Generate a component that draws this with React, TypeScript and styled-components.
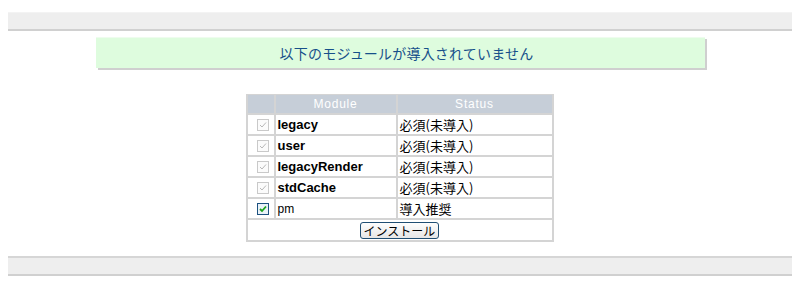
import React from 'react'
import styled, { createGlobalStyle } from 'styled-components'

const GlobalStyle = createGlobalStyle`
  html, body {
    margin: 0;
    padding: 0;
    background: #ffffff;
  }
  body {
    padding: 12px 8px 0;
    font-family: "Liberation Sans", "Noto Sans CJK JP", sans-serif;
    color: #000;
  }
`

const Bar = styled.div<{ bottom?: boolean }>`
  height: 16px;
  background: #eeeeee;
  border-top: ${({ bottom }) => (bottom ? '2px solid #d6d6d6' : '1px solid #f3f3f3')};
  border-bottom: 2px solid #d0d0d0;
`

const Content = styled.div`
  display: flex;
  flex-direction: column;
  align-items: center;
  padding: 6px 0 14px;
`

const Notice = styled.div`
  width: 609px;
  height: 31px;
  margin-left: 1px;
  padding-left: 12px;
  box-sizing: border-box;
  background: #defcde;
  border-top: 1px solid #eefcee;
  box-shadow: 2px 2px 0 #cfcfcf;
  display: flex;
  align-items: center;
  justify-content: center;
  color: #17508a;
  font-family: "Noto Sans CJK JP", sans-serif;
  font-size: 14px;
  letter-spacing: 0.2px;
`

const Table = styled.table`
  margin-top: 26px;
  margin-right: 1px;
  width: 308px;
  border-collapse: collapse;
  border: 1px solid #cfcfcf;
`

const HeadCell = styled.th<{ w?: number }>`
  background: #c6ced8;
  color: #ffffff;
  font-weight: normal;
  font-size: 12px;
  letter-spacing: 0.8px;
  height: 18px;
  padding: 0;
  border: 2px solid #d4d4d4;
  border-top: 1px solid #d4d4d4;
  width: ${({ w }) => (w ? `${w}px` : 'auto')};
`

const Cell = styled.td<{ center?: boolean; bold?: boolean; jp?: boolean }>`
  height: 19px;
  padding: 0 0 0 2px;
  border: 2px solid #d4d4d4;
  text-align: ${({ center }) => (center ? 'center' : 'left')};
  font-weight: ${({ bold }) => (bold ? 'bold' : 'normal')};
  font-family: ${({ jp }) => (jp ? '"Noto Sans CJK JP", sans-serif' : '"Liberation Sans", sans-serif')};
  font-size: ${({ jp, bold }) => (jp ? '13px' : bold ? '13px' : '12px')};
  line-height: 16px;
`

const Box = styled.span<{ active?: boolean }>`
  display: inline-flex;
  align-items: center;
  justify-content: center;
  width: 10px;
  height: 10px;
  margin-left: 2px;
  border: 1px solid ${({ active }) => (active ? '#1c5180' : '#c9c9c9')};
  background: ${({ active }) => (active ? '#eaf2f8' : '#fbfbfb')};
  vertical-align: middle;
`

const Footer = styled.td`
  height: 19px;
  padding: 0;
  text-align: center;
  border: 2px solid #d4d4d4;
`

const Button = styled.button`
  width: 79px;
  height: 17px;
  padding: 0;
  margin: 2px 0 0 0;
  border: 1px solid #1f4e73;
  border-radius: 3px;
  background: linear-gradient(#fdfdfd, #e6e6e6);
  font-family: "Noto Sans CJK JP", sans-serif;
  font-size: 12px;
  line-height: 14px;
  color: #000;
`

function Check({ active }: { active?: boolean }) {
  return (
    <Box active={active}>
      <svg width="8" height="8" viewBox="0 0 8 8">
        <path
          d="M1 4 L3 6 L7 1.5"
          fill="none"
          stroke={active ? '#1aa31a' : '#b8b8b8'}
          strokeWidth={active ? 1.8 : 1}
        />
      </svg>
    </Box>
  )
}

const modules = [
  { name: 'legacy', status: '必須(未導入)', required: true },
  { name: 'user', status: '必須(未導入)', required: true },
  { name: 'legacyRender', status: '必須(未導入)', required: true },
  { name: 'stdCache', status: '必須(未導入)', required: true },
  { name: 'pm', status: '導入推奨', required: false },
]

export default function App() {
  return (
    <>
      <GlobalStyle />
      <Bar />
      <Content>
        <Notice>以下のモジュールが導入されていません</Notice>
        <Table>
          <thead>
            <tr>
              <HeadCell w={26} />
              <HeadCell w={120}>Module</HeadCell>
              <HeadCell>Status</HeadCell>
            </tr>
          </thead>
          <tbody>
            {modules.map((m) => (
              <tr key={m.name}>
                <Cell center>
                  <Check active={!m.required} />
                </Cell>
                <Cell bold={m.required}>{m.name}</Cell>
                <Cell jp>{m.status}</Cell>
              </tr>
            ))}
            <tr>
              <Footer colSpan={3}>
                <Button>インストール</Button>
              </Footer>
            </tr>
          </tbody>
        </Table>
      </Content>
      <Bar bottom />
    </>
  )
}
